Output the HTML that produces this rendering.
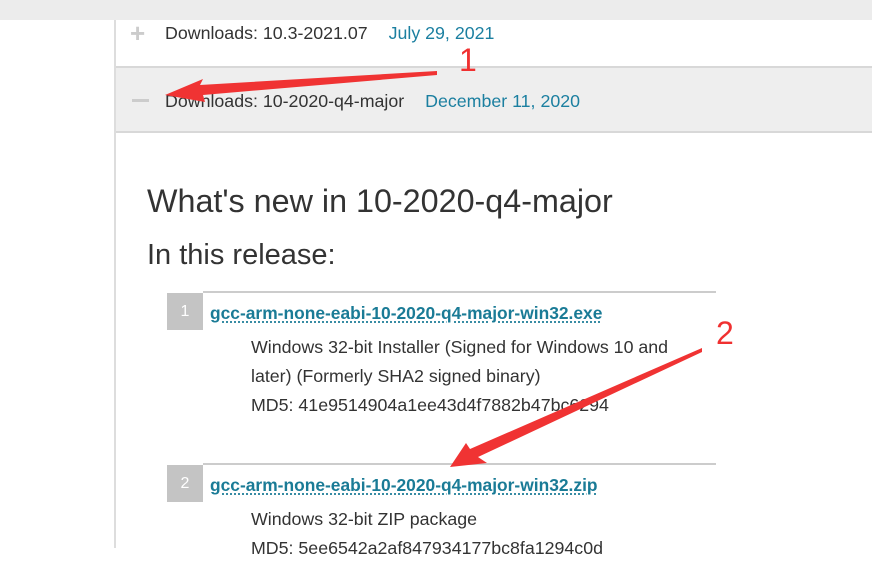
<!DOCTYPE html>
<html><head><style>
body{margin:0;width:872px;height:548px;overflow:hidden;background:#fff;font-family:"Liberation Sans",sans-serif;position:relative;color:#333}
.a{position:absolute;white-space:nowrap}
.t{color:#1b7fa0}
.lk{color:#1a7b96;font-weight:bold;font-size:17.4px;text-decoration:underline dotted #1a7b96;text-underline-offset:3px}
.d{font-size:17.8px;color:#333}
.box{position:absolute;left:167px;width:36px;height:37px;background:#c4c4c4;color:#fff;font-size:16px;text-align:center;line-height:37px}
</style></head><body>
<div class="a" style="left:0;top:0;width:872px;height:20px;background:#ececec"></div>
<div class="a" style="left:114px;top:20px;width:2px;height:528px;background:#ddd"></div>
<div class="a" style="left:116px;top:66px;width:756px;height:67px;background:#eeeeee;border-top:2px solid #d8d8d8;border-bottom:2px solid #d8d8d8;box-sizing:border-box"></div>
<div class="a" style="left:130px;top:18px;font-size:26px;color:#ccc;font-weight:bold">+</div>
<div class="a" style="left:165px;top:23px;font-size:17.8px">Downloads: 10.3-2021.07 <span class="t" style="margin-left:16px">July 29, 2021</span></div>
<div class="a" style="left:132px;top:99px;width:17px;height:3px;background:#ccc"></div>
<div class="a" style="left:165px;top:91px;font-size:17.8px">Downloads: 10-2020-q4-major <span class="t" style="margin-left:16px">December 11, 2020</span></div>
<div class="a" style="left:147px;top:183px;font-size:32.3px;color:#333">What's new in 10-2020-q4-major</div>
<div class="a" style="left:147px;top:239px;font-size:29px;color:#333">In this release:</div>
<div class="a" style="left:203px;top:291px;width:513px;height:2px;background:#ccc"></div>
<div class="box" style="top:293px">1</div>
<div class="a lk" style="left:210px;top:303px">gcc-arm-none-eabi-10-2020-q4-major-win32.exe</div>
<div class="a d" style="left:251px;top:333px;line-height:29px">Windows 32-bit Installer (Signed for Windows 10 and<br>later) (Formerly SHA2 signed binary)<br>MD5: 41e9514904a1ee43d4f7882b47bc6294</div>
<div class="a" style="left:203px;top:463px;width:513px;height:2px;background:#ccc"></div>
<div class="box" style="top:465px">2</div>
<div class="a lk" style="left:210px;top:475px">gcc-arm-none-eabi-10-2020-q4-major-win32.zip</div>
<div class="a d" style="left:251px;top:505px;line-height:29px">Windows 32-bit ZIP package<br>MD5: 5ee6542a2af847934177bc8fa1294c0d</div>
<div class="a" style="left:459px;top:42px;font-size:32px;color:#f03030">1</div>
<div class="a" style="left:716px;top:315px;font-size:32px;color:#f03030">2</div>
<svg class="a" style="left:0;top:0" width="872" height="548">
<polygon points="437,71 200,85 203,79 165,95 205,102 203,95 437,75" fill="#f03333"/>
<polygon points="702,348 470,449 466,443 450,467 487,463 478,457 702,352" fill="#f03333"/>
</svg>
</body></html>
